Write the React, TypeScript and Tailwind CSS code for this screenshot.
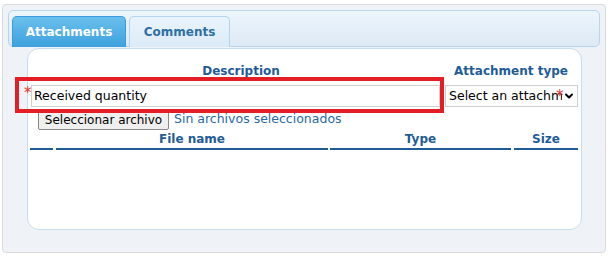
import { ChevronDown } from "lucide-react";

const font = "font-['DejaVu_Sans',Verdana,sans-serif]";

export default function App() {
  return (
    <div className={`relative w-[613px] h-[256px] bg-white pt-[4px] pl-[2px] ${font}`}>
      {/* outer widget */}
      <div className="w-[604px] h-[249px] border border-[#dadada] rounded-[4px] bg-[#eff3f7] pt-[5px] px-[5px]">
        {/* tab strip */}
        <div className="h-[37px] border border-[#b9d5ee] rounded-[5px] bg-gradient-to-b from-[#edf5fc] to-[#dde9f5] flex items-end pl-[3px] gap-[3px]">
          <div className="w-[114px] h-[31px] -mb-px rounded-t-[5px] border border-[#3c9be0] border-b-0 bg-gradient-to-b from-[#6cc0ec] via-[#52b0e6] to-[#3ea1dd] flex items-center justify-center text-white font-bold text-[12px]">
            Attachments
          </div>
          <div className="w-[101px] h-[31px] -mb-px rounded-t-[5px] border border-[#b4d4ee] border-b-0 bg-gradient-to-b from-[#e9f3fc] to-[#dcebf8] flex items-center justify-center text-[#2f6fa3] font-bold text-[12px]">
            Comments
          </div>
        </div>

        {/* panel */}
        <div className="ml-[19px] mt-[1px] w-[555px] h-[182px] bg-white border border-[#c8dcf1] rounded-[12px] pt-[14px]">
          <div className="flex h-[15px] items-center text-[#1f5c97] font-bold text-[12px]">
            <div className="w-[426px] text-center">Description</div>
            <div className="w-[114px] text-center">Attachment type</div>
          </div>

          <div className="flex mt-[7px] h-[22px] items-center text-[12.5px] text-black">
            <span className="-ml-[4px] w-[7px] text-[#e5302a] text-[15px] leading-none self-start mt-[1px]">*</span>
            <div className="w-[409px] h-[22px] border border-[#cfcfcf] flex items-center pl-[2px]">
              Received quantity
            </div>
            <div className="relative ml-[5px] w-[133px] h-[22px] border border-[#cfcfcf] flex items-center pl-[3px] overflow-hidden">
              <span className="whitespace-nowrap overflow-hidden w-[113px]">Select an attachment type</span>
              <span className="absolute left-[110px] top-[3px] text-[#e5302a] text-[15px] leading-none">*</span>
              <ChevronDown className="absolute right-[2px] top-[4px] w-[12px] h-[12px]" strokeWidth={4} />
            </div>
          </div>

          <div className="flex mt-[2px] h-[21px] items-center text-[12.5px]">
            <div className="ml-[10px] w-[131px] h-[21px] border border-[#8a8a8a] rounded-[2px] bg-[#efefef] flex items-center justify-center text-black text-[12px]">
              Seleccionar archivo
            </div>
            <span className="ml-[5px] text-[#2a69a6]">Sin archivos seleccionados</span>
          </div>

          <div className="flex mt-[2px] ml-[2px] text-[#1f5c97] font-bold text-[12px]">
            <div className="w-[23px] h-[18px] border-b-2 border-[#1f5c97]" />
            <div className="ml-[3px] w-[272px] h-[18px] border-b-2 border-[#1f5c97] text-center leading-[15px]">File name</div>
            <div className="ml-[2px] w-[181px] h-[18px] border-b-2 border-[#1f5c97] text-center leading-[15px]">Type</div>
            <div className="ml-[3px] w-[64px] h-[18px] border-b-2 border-[#1f5c97] text-center leading-[15px]">Size</div>
          </div>
        </div>
      </div>

      {/* red annotation box */}
      <div className="absolute left-[15px] top-[77px] w-[429px] h-[36px] border-4 border-[#e31e24]" />
    </div>
  );
}
